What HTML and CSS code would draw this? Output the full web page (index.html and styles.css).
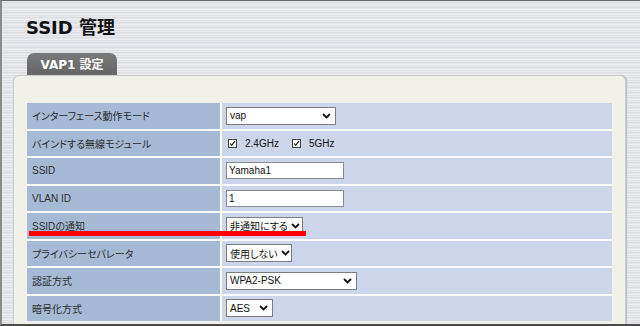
FILE: index.html
```html
<!DOCTYPE html>
<html lang="ja">
<head>
<meta charset="utf-8">
<title>SSID 管理</title>
<link rel="stylesheet" href="styles.css">
</head>
<body>
<div class="frame">
  <h1 class="title">SSID 管理</h1>
  <div class="tab">VAP1 設定</div>
  <div class="panel">
    <div class="settings">
      <div class="label">インターフェース動作モード</div>
      <div class="value"><span class="select w-vap">vap<svg class="chev" viewBox="0 0 9 6"><path d="M1 1 L4.5 4.5 L8 1"/></svg></span></div>

      <div class="label">バインドする無線モジュール</div>
      <div class="value checks">
        <span class="check"><svg viewBox="0 0 9 9"><path d="M1.5 4.5 L3.5 6.8 L7.5 1.5"/></svg></span><span class="check-text">2.4GHz</span>
        <span class="check"><svg viewBox="0 0 9 9"><path d="M1.5 4.5 L3.5 6.8 L7.5 1.5"/></svg></span><span class="check-text">5GHz</span>
      </div>

      <div class="label">SSID</div>
      <div class="value"><span class="input">Yamaha1</span></div>

      <div class="label">VLAN ID</div>
      <div class="value"><span class="input">1</span></div>

      <div class="label">SSIDの通知</div>
      <div class="value"><span class="select w-notify">非通知にする<svg class="chev" viewBox="0 0 9 6"><path d="M1 1 L4.5 4.5 L8 1"/></svg></span></div>

      <div class="label">プライバシーセパレータ</div>
      <div class="value"><span class="select w-priv">使用しない<svg class="chev" viewBox="0 0 9 6"><path d="M1 1 L4.5 4.5 L8 1"/></svg></span></div>

      <div class="label">認証方式</div>
      <div class="value"><span class="select w-auth">WPA2-PSK<svg class="chev" viewBox="0 0 9 6"><path d="M1 1 L4.5 4.5 L8 1"/></svg></span></div>

      <div class="label">暗号化方式</div>
      <div class="value"><span class="select w-enc">AES<svg class="chev" viewBox="0 0 9 6"><path d="M1 1 L4.5 4.5 L8 1"/></svg></span></div>
    </div>
    <div class="mark"></div>
  </div>
</div>
</body>
</html>
```

FILE: styles.css
```css
html, body {
  margin: 0;
  padding: 0;
}
body {
  width: 640px;
  height: 326px;
  overflow: hidden;
  font-family: "Liberation Sans", "Noto Sans CJK JP", sans-serif;
}
.frame {
  position: relative;
  box-sizing: border-box;
  width: 640px;
  height: 326px;
  overflow: hidden;
  border-top: 1px solid #6a6a6a;
  border-left: 2px solid #8a8a8a;
  border-bottom: 2px solid #4a4a4a;
  background-color: #e2e4e8;
  background-image: repeating-linear-gradient(to bottom,
    #e7e9ed 0px, #e7e9ed 1px,
    #dadde2 1px, #dadde2 2px,
    #e3e5e9 2px, #e3e5e9 3px,
    #eceef1 3px, #eceef1 4px,
    #dfe1e6 4px, #dfe1e6 5px);
}
.title {
  margin: 15px 0 0 24px;
  height: 24px;
  font-family: "DejaVu Sans", "Noto Sans CJK JP", sans-serif;
  font-weight: bold;
  font-size: 18px;
  line-height: 24px;
  color: #111;
}
.tab {
  margin: 13px 0 0 25px;
  width: 90px;
  height: 22px;
  box-sizing: border-box;
  border-radius: 7px 7px 0 0;
  background: linear-gradient(to bottom, #7a7a7a, #646464);
  color: #fff;
  font-family: "DejaVu Sans", "Noto Sans CJK JP", sans-serif;
  font-weight: bold;
  font-size: 12px;
  line-height: 22px;
  text-align: center;
  padding-top: 1px;
}
.panel {
  position: relative;
  margin: 0 0 0 11px;
  width: 613px;
  height: 260px;
  box-sizing: border-box;
  background: #f1f1ea;
  border: 1px solid #c9cacc;
  border-bottom: none;
  border-radius: 6px 6px 0 0;
  box-shadow: 1px 0 1px #b9bbbf;
  padding: 27px 13px 0 13px;
}
.settings {
  display: grid;
  grid-template-columns: 193px 390px;
  grid-auto-rows: 25.5px;
  gap: 2px;
  background: #fbfbf9;
  width: 585px;
}
.label {
  background: #a7bad5;
  color: #2a2a2a;
  font-size: 10px;
  font-feature-settings: "palt";
  padding-left: 5px;
  display: flex;
  align-items: center;
}
.value {
  background: #ccd5e9;
  display: flex;
  align-items: center;
  padding-left: 4px;
  font-size: 10px;
  color: #111;
}
.select, .input {
  box-sizing: border-box;
  height: 18px;
  background: #fff;
  border: 1px solid #7d7d7d;
  display: flex;
  align-items: center;
  padding: 0 3px;
  font-size: 10px;
  font-feature-settings: "palt";
  color: #111;
  white-space: nowrap;
}
.input {
  width: 118px;
  height: 17px;
  border-color: #8a8a8a;
  padding-left: 2px;
}
.select {
  justify-content: space-between;
}
.chev {
  width: 9px;
  height: 6px;
  flex: none;
  margin-left: 3px;
  margin-right: 1px;
}
.chev path {
  fill: none;
  stroke: #111;
  stroke-width: 1.8;
}
.w-vap { width: 110px; }
.w-notify { width: 77px; }
.w-priv { width: 66px; }
.w-auth { width: 131px; }
.w-enc { width: 47px; }
.check {
  width: 9px;
  height: 9px;
  box-sizing: border-box;
  border: 1px solid #444;
  background: #fff;
  margin-left: 2px;
  display: flex;
}
.check svg {
  width: 7px;
  height: 7px;
}
.check path {
  fill: none;
  stroke: #111;
  stroke-width: 1.4;
}
.check-text {
  margin-left: 8px;
  margin-right: 11px;
}
.mark {
  position: absolute;
  left: 15px;
  top: 155px;
  width: 277px;
  height: 5px;
  background: #ff0000;
}
```
